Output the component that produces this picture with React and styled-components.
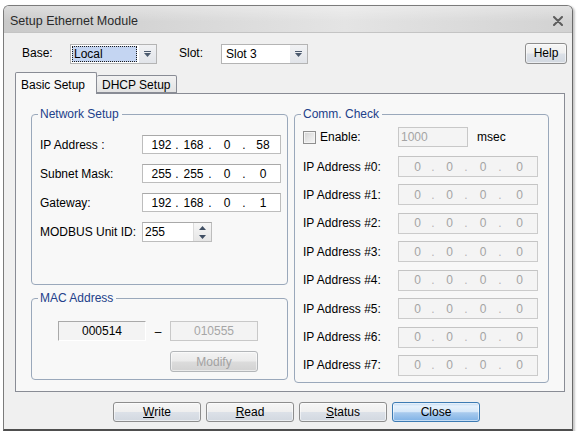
import React from 'react';
import styled, { createGlobalStyle, css } from 'styled-components';

const Global = createGlobalStyle`
  html, body { margin: 0; padding: 0; background: #ffffff; }
  body { font-family: "Liberation Sans", Arial, sans-serif; font-size: 12px; color: #000; }
  * { box-sizing: border-box; }
`;

const Page = styled.div`
  padding: 5px 0 0 3px;
`;

const Window = styled.div`
  width: 570px;
  height: 426px;
  border: 1px solid #7b7b7b;
  border-right-color: #6a6a6a;
  border-bottom: 2px solid #4e4e4e;
  border-radius: 6px 6px 0 0;
  background: #f0f0f0;
  display: flex;
  flex-direction: column;
  box-shadow: 2px 1px 2px rgba(0, 0, 0, 0.22);
  overflow: hidden;
`;

const TitleBar = styled.div`
  height: 27px;
  flex: none;
  display: flex;
  align-items: center;
  justify-content: space-between;
  padding: 3px 9px 0 6px;
  font-size: 12.5px;
  color: #2a2a2a;
  background:
    linear-gradient(to bottom, rgba(255,255,255,0.35), rgba(255,255,255,0) 60%),
    linear-gradient(to right, #c9c9c9 0%, #d9d9d9 35%, #e4e4e4 60%, #d2d2d2 100%);
  border-bottom: 1px solid #c4c4c4;
`;

const CloseX = styled.svg`
  width: 10px;
  height: 10px;
  display: block;
`;

const Body = styled.div`
  flex: 1;
  display: flex;
  flex-direction: column;
  padding: 0 7px 0 11px;
`;

const TopRow = styled.div`
  margin-top: 9px;
  height: 22px;
  display: flex;
  align-items: center;
  padding-left: 7px;
`;

const TopLabel = styled.span`
  width: ${p => p.$w}px;
  margin-left: ${p => p.$ml || 0}px;
  flex: none;
`;

const Combo = styled.div`
  width: 87px;
  height: 20px;
  margin-top: 1px;
  display: flex;
  border: 1px solid #b4b4b4;
  background: #fff;
  flex: none;
`;

const ComboText = styled.div`
  flex: 1;
  margin: 1px 2px 1px 1px;
  padding-left: ${p => (p.$focused ? 2 : 3)}px;
  display: flex;
  align-items: center;
  line-height: 14px;
  ${p => p.$focused && css`
    background: #c4d5f2;
    outline: 1px dotted #1a1a1a;
    outline-offset: -1px;
  `}
`;

const ComboArrow = styled.div`
  width: 17px;
  display: flex;
  align-items: center;
  justify-content: center;
  background: linear-gradient(to bottom, #f1f2f4, #e1e4e9);
`;

const Button = styled.button`
  width: ${p => p.$w || 88}px;
  height: ${p => p.$h || 20}px;
  padding: 0;
  font-family: inherit;
  font-size: 12px;
  color: ${p => (p.disabled ? '#a2a2a2' : '#000')};
  border: 1px solid ${p => (p.$primary ? '#3d7bb3' : p.disabled ? '#b3b6b9' : '#8d8d8d')};
  border-radius: 3px;
  flex: none;
  background: ${p =>
    p.$primary
      ? 'linear-gradient(to bottom, #c0d9f2 0%, #e6f1fc 18%, #d6e8f9 48%, #a9cbee 54%, #7fb2e6 100%)'
      : p.disabled
      ? 'linear-gradient(to bottom, #f3f3f3 0%, #ebebeb 48%, #dcdcdc 52%, #d2d2d2 100%)'
      : 'linear-gradient(to bottom, #f6f6f6 0%, #efefef 48%, #dce1e8 52%, #d2d8e0 100%)'};
  box-shadow: inset 0 0 0 1px rgba(255, 255, 255, 0.55);
  margin-left: ${p => (p.$auto ? 'auto' : '0')};
  margin-right: ${p => p.$mr || 0}px;
`;

const U = styled.span`
  text-decoration: underline;
`;

const Tabs = styled.div`
  margin-top: 8px;
  height: 21px;
  display: flex;
  align-items: flex-end;
  position: relative;
  z-index: 1;
`;

const Tab = styled.div`
  height: ${p => (p.$active ? 22 : 18)}px;
  margin-bottom: ${p => (p.$active ? -1 : 0)}px;
  width: ${p => p.$w}px;
  padding-left: 5px;
  padding-top: ${p => (p.$active ? 2 : 1)}px;
  border: 1px solid #898c95;
  border-bottom: ${p => (p.$active ? 'none' : '1px solid #898c95')};
  border-left: ${p => (p.$active ? '1px solid #898c95' : 'none')};
  border-radius: 2px 2px 0 0;
  background: ${p => (p.$active ? '#f8f8f8' : 'linear-gradient(to bottom, #f2f2f2, #e3e3e3)')};
  display: flex;
  align-items: center;
  line-height: 14px;
`;

const Panel = styled.div`
  height: 299px;
  border: 1px solid #898c95;
  background: #f8f8f8;
  padding: 13px 14px 0 15px;
  display: flex;
  gap: 6px;
`;

const Column = styled.div`
  width: ${p => p.$w}px;
  display: flex;
  flex-direction: column;
  gap: 6px;
`;

const Group = styled.fieldset`
  margin: 0;
  padding: 0 6px;
  border: 1px solid #9aa8bb;
  border-radius: 4px;
  height: ${p => p.$h}px;
  min-width: 0;
`;

const Legend = styled.legend`
  padding: 0 3px 0 2px;
  color: #22408a;
  font-size: 12px;
  line-height: 14px;
`;

const NetGrid = styled.div`
  padding: 14px 0 0 2px;
  display: grid;
  grid-template-columns: 102px auto;
  grid-template-rows: 19px 19px 19px 20px;
  row-gap: 10px;
  align-items: center;
`;

const IpBox = styled.div`
  width: ${p => p.$w}px;
  height: ${p => p.$h || 19}px;
  border: 1px solid ${p => (p.$disabled ? '#cbcbcb' : '#bdbdbd')};
  border-top-color: ${p => (p.$disabled ? '#c4c4c4' : '#a9a9a9')};
  background: ${p => (p.$disabled ? '#f4f4f4' : '#fff')};
  color: ${p => (p.$disabled ? '#a4a4a4' : '#000')};
  display: grid;
  grid-template-columns: 5px 27px 4px 29px 4px 30px 4px 1fr;
  align-items: center;
  text-align: center;
  line-height: 14px;
`;

const Dot = styled.span`
  color: ${p => (p.$disabled ? '#b4b4b4' : '#000')};
`;

const SpinWrap = styled.div`
  display: flex;
  height: 20px;
  width: 70px;
  border: 1px solid #bdbdbd;
  border-top-color: #a9a9a9;
  background: #fff;
`;

const SpinInput = styled.div`
  flex: 1;
  padding-left: 2px;
  display: flex;
  align-items: center;
  line-height: 14px;
`;

const SpinButtons = styled.div`
  width: 18px;
  display: flex;
  flex-direction: column;
  border-left: 1px solid #dcdcdc;
  background: linear-gradient(to bottom, #f7f7f7, #e6e6e6);
`;

const SpinHalf = styled.div`
  flex: 1;
  display: flex;
  align-items: center;
  justify-content: center;
`;

const MacGrid = styled.div`
  padding: 16px 0 0 20px;
  display: grid;
  grid-template-columns: 88px 24px 88px;
  grid-template-rows: 20px 21px;
  row-gap: 10px;
`;

const MacBox = styled.div`
  border: 1px solid ${p => (p.$disabled ? '#c8c8c8' : '#a9a9a9')};
  border-right-color: ${p => (p.$disabled ? '#c8c8c8' : '#ffffff')};
  border-bottom-color: ${p => (p.$disabled ? '#c8c8c8' : '#ffffff')};
  background: #f3f3f3;
  color: ${p => (p.$disabled ? '#a6a6a6' : '#000')};
  display: flex;
  align-items: center;
  justify-content: center;
  line-height: 14px;
`;

const Dash = styled.span`
  display: flex;
  align-items: flex-end;
  justify-content: center;
  padding-bottom: 3px;
  line-height: 12px;
`;

const CommBody = styled.div`
  padding: 6px 0 0 2px;
  display: flex;
  flex-direction: column;
`;

const EnableRow = styled.div`
  height: 20px;
  display: flex;
  align-items: center;
`;

const EnableLabel = styled.label`
  width: 95px;
  display: flex;
  align-items: center;
  gap: 4px;
`;

const Check = styled.span`
  width: 13px;
  height: 13px;
  border: 1px solid #8f8f8f;
  background: linear-gradient(135deg, #d2d2d2 0%, #e6e6e6 50%, #f6f6f6 100%);
  box-shadow: inset 0 0 0 1px #f4f4f4;
  flex: none;
`;

const MsecInput = styled.div`
  width: 70px;
  height: 20px;
  border: 1px solid #c8c8c8;
  background: #f4f4f4;
  color: #a4a4a4;
  padding-left: 2px;
  display: flex;
  align-items: center;
`;

const Unit = styled.span`
  margin-left: 9px;
`;

const CommGrid = styled.div`
  margin-top: 9px;
  display: grid;
  grid-template-columns: 95px 140px;
  grid-auto-rows: 21px;
  row-gap: 7.43px;
  align-items: center;
`;

const ButtonRow = styled.div`
  margin-top: 10px;
  display: flex;
  gap: 5px;
  padding-left: 98px;
`;

const ArrowIcon = () => (
  <svg width="7" height="6" viewBox="0 0 7 6">
    <rect x="0" y="0" width="7" height="1" fill="#4b5a6e" />
    <polygon points="0,2 7,2 3.5,6" fill="#4b5a6e" />
  </svg>
);

const Tri = ({ up }) => (
  <svg width="7" height="4" viewBox="0 0 7 4">
    <polygon points={up ? '0,4 7,4 3.5,0' : '0,0 7,0 3.5,4'} fill="#3f4e63" />
  </svg>
);

const Ip = ({ values, w, h, disabled }) => (
  <IpBox $w={w} $h={h} $disabled={disabled}>
    <span />
    <span>{values[0]}</span>
    <Dot $disabled={disabled}>.</Dot>
    <span>{values[1]}</span>
    <Dot $disabled={disabled}>.</Dot>
    <span>{values[2]}</span>
    <Dot $disabled={disabled}>.</Dot>
    <span>{values[3]}</span>
  </IpBox>
);

export default function App() {
  const commRows = [0, 1, 2, 3, 4, 5, 6, 7];
  return (
    <>
      <Global />
      <Page>
        <Window>
          <TitleBar>
            <span>Setup Ethernet Module</span>
            <CloseX viewBox="0 0 10 10">
              <path d="M1 1 L9 9 M9 1 L1 9" stroke="#5c5c5c" strokeWidth="2" strokeLinecap="round" />
            </CloseX>
          </TitleBar>
          <Body>
            <TopRow>
              <TopLabel $w={48}>Base:</TopLabel>
              <Combo>
                <ComboText $focused>Local</ComboText>
                <ComboArrow><ArrowIcon /></ComboArrow>
              </Combo>
              <TopLabel $w={42} $ml={22}>Slot:</TopLabel>
              <Combo>
                <ComboText>Slot 3</ComboText>
                <ComboArrow><ArrowIcon /></ComboArrow>
              </Combo>
              <Button $auto $w={42} $h={21} $mr={-2}>Help</Button>
            </TopRow>

            <Tabs>
              <Tab $active $w={82}>Basic Setup</Tab>
              <Tab $w={80}>DHCP Setup</Tab>
            </Tabs>

            <Panel>
              <Column $w={257}>
                <Group $h={178}>
                  <Legend>Network Setup</Legend>
                  <NetGrid>
                    <span>IP Address :</span>
                    <Ip values={['192', '168', '0', '58']} w={139} />
                    <span>Subnet Mask:</span>
                    <Ip values={['255', '255', '0', '0']} w={139} />
                    <span>Gateway:</span>
                    <Ip values={['192', '168', '0', '1']} w={139} />
                    <span>MODBUS Unit ID:</span>
                    <SpinWrap>
                      <SpinInput>255</SpinInput>
                      <SpinButtons>
                        <SpinHalf><Tri up /></SpinHalf>
                        <SpinHalf><Tri /></SpinHalf>
                      </SpinButtons>
                    </SpinWrap>
                  </NetGrid>
                </Group>
                <Group $h={89}>
                  <Legend>MAC Address</Legend>
                  <MacGrid>
                    <MacBox>000514</MacBox>
                    <Dash>–</Dash>
                    <MacBox $disabled>010555</MacBox>
                    <span />
                    <span />
                    <Button disabled $w={88} $h={21}>Modify</Button>
                  </MacGrid>
                </Group>
              </Column>

              <Column $w={255}>
                <Group $h={276}>
                  <Legend>Comm. Check</Legend>
                  <CommBody>
                    <EnableRow>
                      <EnableLabel>
                        <Check />
                        <span>Enable:</span>
                      </EnableLabel>
                      <MsecInput>1000</MsecInput>
                      <Unit>msec</Unit>
                    </EnableRow>
                    <CommGrid>
                      {commRows.map(i => (
                        <React.Fragment key={i}>
                          <span>IP Address #{i}:</span>
                          <Ip values={['0', '0', '0', '0']} w={140} h={21} disabled />
                        </React.Fragment>
                      ))}
                    </CommGrid>
                  </CommBody>
                </Group>
              </Column>
            </Panel>

            <ButtonRow>
              <Button><U>W</U>rite</Button>
              <Button><U>R</U>ead</Button>
              <Button><U>S</U>tatus</Button>
              <Button $primary>Close</Button>
            </ButtonRow>
          </Body>
        </Window>
      </Page>
    </>
  );
}
